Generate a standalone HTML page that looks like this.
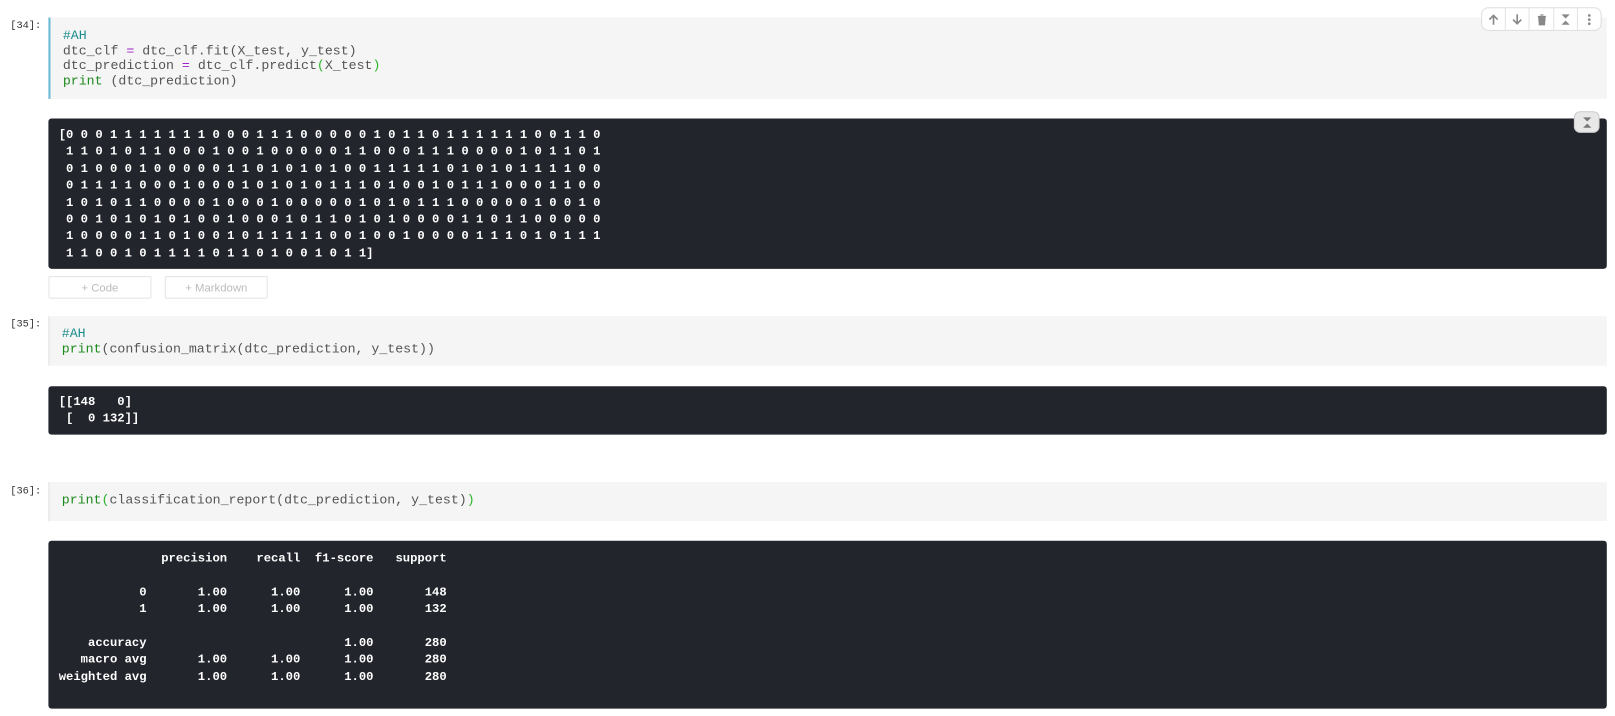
<!DOCTYPE html>
<html><head><meta charset="utf-8"><style>
html,body{margin:0;padding:0;background:#fff;width:1615px;height:716px;overflow:hidden;position:relative}
#w{position:absolute;left:0;top:0;width:1568px;height:696px;transform:scale(1.03);transform-origin:0 0}
.lbl{position:absolute;left:10px;font:10px "Liberation Mono",monospace;color:#333}
.code{position:absolute;left:47px;width:1513px;background:#f5f5f5;border-left:1px solid #e0e0e0;box-sizing:border-box}
.code pre,.out pre{margin:0;font-family:"Liberation Mono",monospace;white-space:pre}
.code pre{position:absolute;left:12px;color:#555;line-height:14.6px;font-size:12.85px}
.out{position:absolute;left:47px;width:1513px;background:#22252c;border-radius:3px}
.out pre{position:absolute;left:10px;color:#fff;font-weight:bold;line-height:16.4px;font-size:11.85px}
.c{color:#1a8c8c}.k{color:#1d8a1d}.o{color:#a020c8}.g{color:#2bb52b}
.btn{position:absolute;top:268px;height:22px;border:1px solid #e5e5e5;border-radius:2px;font:11px "Liberation Sans",sans-serif;color:#bbb;text-align:center;line-height:22px;box-sizing:border-box}
.tb{position:absolute;left:1438px;top:7px;width:115px;height:21px;border:1px solid #ddd;border-radius:7px;background:#fff;display:flex}
.tb div{flex:1;border-right:1px solid #e2e2e2;display:flex;align-items:center;justify-content:center}
.tb div:last-child{border-right:none}
</style></head><body><div id="w">

<div class="lbl" style="top:20px">[34]:</div>
<div class="code" style="top:17px;height:79px;border-left:2px solid #6cb9d4">
<pre style="top:11px"><span class="c">#AH</span>
dtc_clf <span class="o">=</span> dtc_clf.fit(X_test, y_test)
dtc_prediction <span class="o">=</span> dtc_clf.predict<span class="g">(</span>X_test<span class="g">)</span>
<span class="k">print</span> (dtc_prediction)</pre>
</div>
<div class="tb">
<div><svg width="12" height="12" viewBox="0 0 12 12"><path d="M6 11V2M2 6l4-4 4 4" stroke="#888" stroke-width="1.6" fill="none"/></svg></div>
<div><svg width="12" height="12" viewBox="0 0 12 12"><path d="M6 1v9M2 6l4 4 4-4" stroke="#888" stroke-width="1.6" fill="none"/></svg></div>
<div><svg width="12" height="12" viewBox="0 0 12 12"><path d="M2 3h8M4.5 1.5h3M3 4h6l-.5 7h-5z" stroke="#888" stroke-width="1.2" fill="#888"/></svg></div>
<div><svg width="12" height="12" viewBox="0 0 12 12"><path d="M2 1h8L6 5zM2 11h8L6 7z" fill="#888"/></svg></div>
<div><svg width="12" height="12" viewBox="0 0 12 12"><circle cx="6" cy="2" r="1.3" fill="#888"/><circle cx="6" cy="6" r="1.3" fill="#888"/><circle cx="6" cy="10" r="1.3" fill="#888"/></svg></div>
</div>

<div style="position:absolute;left:1528px;top:108px;width:23px;height:19px;background:#e8e8e8;border:1px solid #ccc;border-radius:6px;display:flex;align-items:center;justify-content:center;z-index:2"><svg width="12" height="12" viewBox="0 0 12 12"><path d="M2 1h8L6 5zM2 11h8L6 7z" fill="#777"/></svg></div>
<div class="out" style="top:115px;height:146px">
<pre style="top:8px">[0 0 0 1 1 1 1 1 1 1 0 0 0 1 1 1 0 0 0 0 0 1 0 1 1 0 1 1 1 1 1 1 0 0 1 1 0
 1 1 0 1 0 1 1 0 0 0 1 0 0 1 0 0 0 0 0 1 1 0 0 0 1 1 1 0 0 0 0 1 0 1 1 0 1
 0 1 0 0 0 1 0 0 0 0 0 1 1 0 1 0 1 0 1 0 0 1 1 1 1 1 0 1 0 1 0 1 1 1 1 0 0
 0 1 1 1 1 0 0 0 1 0 0 0 1 0 1 0 1 0 1 1 1 0 1 0 0 1 0 1 1 1 0 0 0 1 1 0 0
 1 0 1 0 1 1 0 0 0 0 1 0 0 0 1 0 0 0 0 0 1 0 1 0 1 1 1 0 0 0 0 0 1 0 0 1 0
 0 0 1 0 1 0 1 0 1 0 0 1 0 0 0 1 0 1 1 0 1 0 1 0 0 0 0 1 1 0 1 1 0 0 0 0 0
 1 0 0 0 0 1 1 0 1 0 0 1 0 1 1 1 1 1 0 0 1 0 0 1 0 0 0 0 1 1 1 0 1 0 1 1 1
 1 1 0 0 1 0 1 1 1 1 0 1 1 0 1 0 0 1 0 1 1]</pre>
</div>

<div class="btn" style="left:47px;width:100px">+ Code</div>
<div class="btn" style="left:160px;width:100px">+ Markdown</div>

<div class="lbl" style="top:310px">[35]:</div>
<div class="code" style="top:307px;height:48px">
<pre style="top:10px"><span class="c">#AH</span>
<span class="k">print</span>(confusion_matrix(dtc_prediction, y_test))</pre>
</div>
<div class="out" style="top:375px;height:47px">
<pre style="top:7px">[[148   0]
 [  0 132]]</pre>
</div>

<div class="lbl" style="top:472px">[36]:</div>
<div class="code" style="top:468px;height:38px">
<pre style="top:11px"><span class="k">print</span><span class="g">(</span>classification_report(dtc_prediction, y_test)<span class="g">)</span></pre>
</div>
<div class="out" style="top:525px;height:163px">
<pre style="top:9px">              precision    recall  f1-score   support

           0       1.00      1.00      1.00       148
           1       1.00      1.00      1.00       132

    accuracy                           1.00       280
   macro avg       1.00      1.00      1.00       280
weighted avg       1.00      1.00      1.00       280</pre>
</div>
</div></body></html>
